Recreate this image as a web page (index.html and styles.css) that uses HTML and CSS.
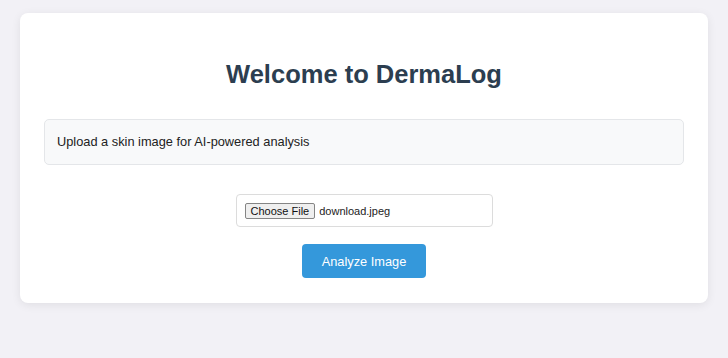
FILE: index.html
```html
<!DOCTYPE html>
<html lang="en">
<head>
  <meta charset="UTF-8" />
  <meta name="viewport" content="width=device-width, initial-scale=1.0"/>
  <title>DermaLog</title>
  <link rel="stylesheet" href="styles.css">
</head>
<body>
  <div class="container">
    <h1>Welcome to DermaLog</h1>
    <div class="info">Upload a skin image for AI-powered analysis</div>
    <form class="upload-form" onsubmit="return false;">
      <label class="file-field">
        <span class="choose-btn">Choose File</span>
        <span class="file-name">download.jpeg</span>
      </label>
      <button type="submit" class="analyze-btn">Analyze Image</button>
    </form>
  </div>
</body>
</html>
```

FILE: styles.css
```css
* {
  box-sizing: border-box;
}
body {
  margin: 0;
  padding: 13px 20px;
  font-family: "Liberation Sans", Arial, sans-serif;
  background: #f2f1f6;
  color: #222;
}
.container {
  background: #ffffff;
  border-radius: 8px;
  padding: 24px 24px 25px;
  box-shadow: 0 2px 10px rgba(0, 0, 0, 0.08);
}
h1 {
  margin: 22px 0 30px;
  font-size: 25.5px;
  line-height: 30px;
  text-align: center;
  color: #2c3e50;
}
.info {
  background: #f8f9fa;
  border: 1px solid #e4e6e9;
  border-radius: 5px;
  padding: 12px;
  font-size: 12.8px;
  line-height: 20px;
  color: #222;
}
.upload-form {
  margin-top: 29px;
  display: flex;
  flex-direction: column;
  align-items: center;
  gap: 17px;
}
.file-field {
  width: 257px;
  height: 33px;
  border: 1px solid #dcdcdc;
  border-radius: 4px;
  padding: 0 8px;
  display: flex;
  align-items: center;
  gap: 4px;
  font-size: 11px;
}
.choose-btn {
  height: 16px;
  line-height: 14px;
  padding: 0 5px;
  border: 1px solid #858585;
  border-radius: 2px;
  background: #efefef;
  color: #111;
}
.file-name {
  color: #222;
}
.analyze-btn {
  height: 34px;
  padding: 0 20px;
  background: #3498db;
  color: #ffffff;
  border: none;
  border-radius: 4px;
  font-family: inherit;
  font-size: 12.8px;
  cursor: pointer;
}
```
